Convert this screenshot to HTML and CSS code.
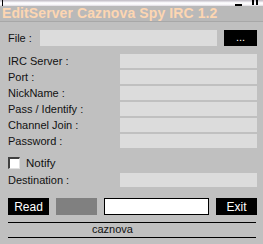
FILE: index.html
```html
<!DOCTYPE html>
<html lang="en">
  <head>
    <meta charset="UTF-8" />
    <meta name="viewport" content="width=device-width, initial-scale=1.0" />
    <title>EditServer Caznova Spy IRC 1.2</title>
    <link rel="stylesheet" href="styles.css">
  </head>
  <body>
    <div class="window">
      <div class="topbar">
        <span class="edge"></span>
        <span class="min"></span>
        <span class="max"></span>
      </div>
      <div class="title">EditServer Caznova Spy IRC 1.2</div>
      <div class="form">
        <div class="file-row">
          <label class="file-label">File :</label>
          <div class="field file-field"></div>
          <div class="btn dots">...</div>
        </div>
        <div class="fields">
          <div class="row"><label>IRC Server :</label><div class="field"></div></div>
          <div class="row"><label>Port :</label><div class="field"></div></div>
          <div class="row"><label>NickName :</label><div class="field"></div></div>
          <div class="row"><label>Pass / Identify :</label><div class="field"></div></div>
          <div class="row"><label>Channel Join :</label><div class="field"></div></div>
          <div class="row"><label>Password :</label><div class="field"></div></div>
        </div>
        <div class="notify">
          <span class="check"></span>
          <span>Notify</span>
        </div>
        <div class="row dest"><label>Destination :</label><div class="field"></div></div>
        <div class="buttons">
          <div class="btn">Read</div>
          <div class="grey-box"></div>
          <div class="white-box"></div>
          <div class="btn">Exit</div>
        </div>
        <div class="status">caznova</div>
      </div>
    </div>
  </body>
</html>
```

FILE: styles.css
```css
* {
  box-sizing: border-box;
  margin: 0;
  padding: 0;
}
body {
  background-color: #c0c0c0;
  font-family: "Liberation Sans", Arial, sans-serif;
  font-size: 11px;
  color: #111;
}
.window {
  width: 263px;
  height: 244px;
  overflow: hidden;
}
.topbar {
  height: 6px;
  position: relative;
  background: linear-gradient(#c8c4cc 0, #c8c4cc 1px, #f4f2f6 2px, #ffffff 4px, #ddd9e0 6px);
  overflow: hidden;
}
.topbar .edge {
  position: absolute;
  left: 2px;
  top: 0;
  width: 1px;
  height: 6px;
  background: #000;
}
.topbar .min {
  position: absolute;
  left: 235px;
  top: 4px;
  width: 7px;
  height: 2px;
  background: #000;
}
/* bottom of the cut-off maximize glyph */
.topbar .max {
  position: absolute;
  left: 252px;
  top: 0;
  width: 6px;
  height: 5px;
  border-left: 2px solid #000;
  border-right: 2px solid #000;
}
.title {
  height: 16px;
  padding-left: 2px;
  background-color: #b9b9b9;
  border-bottom: 1px solid #a8a8a8;
  color: #fdd6b2;
  font-size: 14px;
  font-weight: bold;
  letter-spacing: 0.1px;
  line-height: 15px;
  white-space: nowrap;
}
.form {
  padding: 8px 6px 0 8px;
}
.file-row {
  display: flex;
  align-items: center;
  height: 16px;
}
.file-label {
  width: 32px;
}
.field {
  background-color: #dcdcdc;
  height: 14px;
  width: 137px;
}
.file-field {
  width: 177px;
  height: 16px;
}
.btn {
  background-color: #000;
  color: #fff;
  width: 41px;
  height: 17px;
  display: flex;
  align-items: center;
  justify-content: center;
  font-size: 12px;
}
.dots {
  width: 33px;
  height: 16px;
  margin-left: 7px;
  font-size: 11px;
  padding-bottom: 2px;
}
.fields {
  display: flex;
  flex-direction: column;
  gap: 2px;
  margin-top: 8px;
}
.row {
  display: flex;
  align-items: center;
  height: 14px;
}
.row label {
  width: 112px;
}
.notify {
  display: flex;
  align-items: center;
  gap: 6px;
  height: 12px;
  margin-top: 9px;
  font-size: 11.5px;
}
.check {
  width: 12px;
  height: 12px;
  background: #fff;
  border-top: 2px solid #404040;
  border-left: 2px solid #404040;
  border-right: 1px solid #e0e0e0;
  border-bottom: 1px solid #e0e0e0;
}
.dest {
  margin-top: 4px;
}
.buttons {
  display: flex;
  gap: 7px;
  margin-top: 11px;
  height: 17px;
}
.grey-box {
  width: 41px;
  background-color: #808080;
}
.white-box {
  width: 105px;
  background-color: #fff;
  border: 1px solid #000;
}
.status {
  margin-top: 7px;
  width: 248px;
  height: 16px;
  border-top: 1px solid #000;
  border-bottom: 1px solid #000;
  padding-left: 84px;
  font-size: 11px;
  line-height: 13px;
}
```
